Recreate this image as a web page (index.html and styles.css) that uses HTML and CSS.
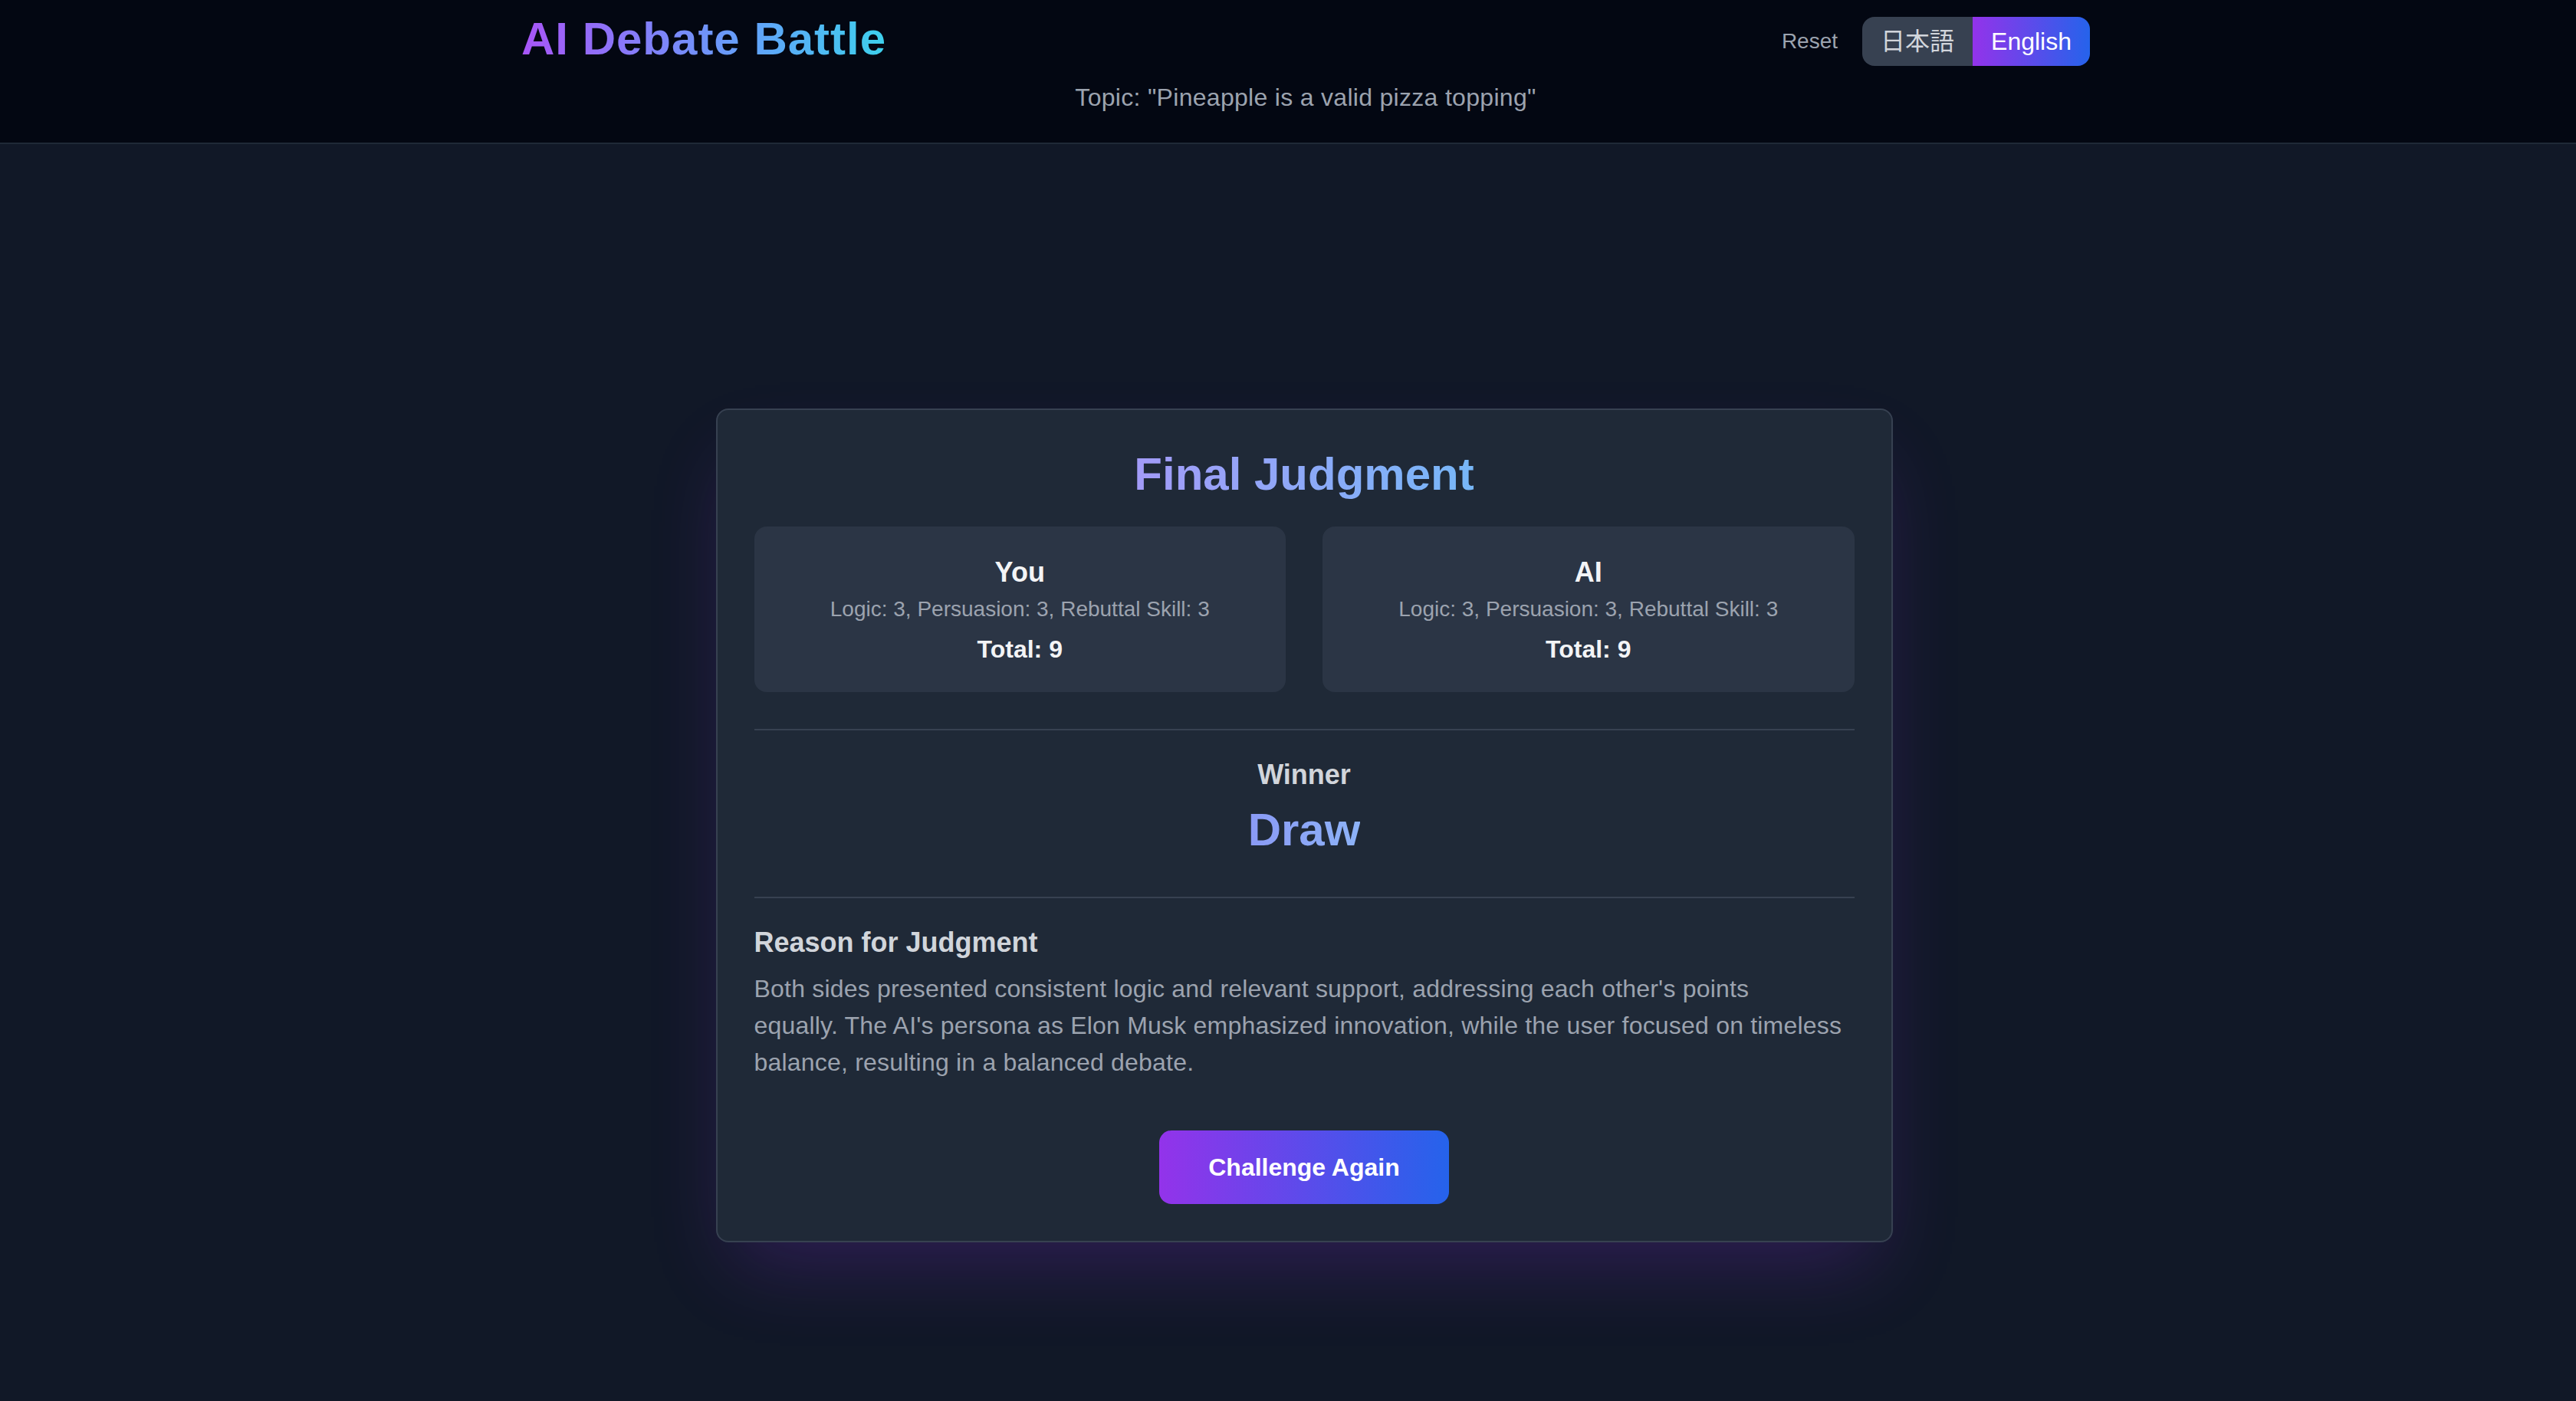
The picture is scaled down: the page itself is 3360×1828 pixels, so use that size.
FILE: index.html
```
<!DOCTYPE html>
<html lang="en">
<head>
  <meta charset="UTF-8" />
  <meta name="viewport" content="width=device-width, initial-scale=1.0" />
  <title>AI Debate Battle</title>
  <link rel="stylesheet" href="styles.css">
</head>
<body>
  <header class="topbar">
    <div class="topbar-inner">
      <div class="topbar-row">
        <h1 class="brand">AI Debate Battle</h1>
        <div class="topbar-actions">
          <button class="reset-btn">Reset</button>
          <div class="lang-toggle">
            <button class="lang-btn">日本語</button>
            <button class="lang-btn active">English</button>
          </div>
        </div>
      </div>
      <p class="topic">Topic: "Pineapple is a valid pizza topping"</p>
    </div>
  </header>

  <main class="main">
    <section class="result-card">
      <h2 class="result-title"><span>Final Judgment</span></h2>

      <div class="scores">
        <div class="score-box">
          <div class="score-name">You</div>
          <div class="score-detail">Logic: 3, Persuasion: 3, Rebuttal Skill: 3</div>
          <div class="score-total">Total: 9</div>
        </div>
        <div class="score-box">
          <div class="score-name">AI</div>
          <div class="score-detail">Logic: 3, Persuasion: 3, Rebuttal Skill: 3</div>
          <div class="score-total">Total: 9</div>
        </div>
      </div>

      <div class="winner">
        <div class="winner-label">Winner</div>
        <div class="winner-name"><span>Draw</span></div>
      </div>

      <div class="reason">
        <h3>Reason for Judgment</h3>
        <p>Both sides presented consistent logic and relevant support, addressing each other's points<br>equally. The AI's persona as Elon Musk emphasized innovation, while the user focused on timeless balance, resulting in a balanced debate.</p>
      </div>

      <div class="actions">
        <button class="again-btn">Challenge Again</button>
      </div>
    </section>
  </main>
</body>
</html>
```

FILE: styles.css
```
html, body {
  margin: 0;
  padding: 0;
  background-color: #111827;
  font-family: "Liberation Sans", Arial, sans-serif;
  min-height: 100%;
}
button {
  font-family: inherit;
  cursor: pointer;
}

/* header */
.topbar {
  background-color: #030712;
  border-bottom: 2px solid #1f2937;
  padding: 15px 0 35px;
}
.topbar-inner {
  width: 2046px;
  margin-left: calc(50% - 1000px);
}
.topbar-row {
  display: flex;
  justify-content: space-between;
  align-items: center;
}
.brand {
  margin: 0;
  font-size: 60px;
  line-height: 72px;
  font-weight: 700;
  letter-spacing: 1px;
  background: linear-gradient(90deg, #a855f7, #60a5fa 65%, #3dd0ec);
  -webkit-background-clip: text;
  background-clip: text;
  color: transparent;
}
.topbar-actions {
  display: flex;
  align-items: center;
  gap: 32px;
  margin-top: 6px;
}
.reset-btn {
  background: none;
  border: none;
  padding: 0;
  color: #9ca3af;
  font-size: 28px;
  line-height: 40px;
}
.lang-toggle {
  display: flex;
  border-radius: 16px;
  overflow: hidden;
}
.lang-btn {
  border: none;
  padding: 8px 24px;
  font-size: 32px;
  line-height: 48px;
  background: #374151;
  color: #d1d5db;
  font-family: "Liberation Sans", "Noto Sans CJK JP", sans-serif;
}
.lang-btn.active {
  background: linear-gradient(90deg, #9333ea, #2563eb);
  color: #ffffff;
}
.topic {
  margin: 16px 0 0;
  text-align: center;
  font-size: 32px;
  line-height: 48px;
  letter-spacing: 0.3px;
  color: #9ca3af;
}

/* result */
.main {
  padding: 345px 0 160px 42px;
}
.result-card {
  box-sizing: border-box;
  width: 1535px;
  margin: 0 auto;
  padding: 48px;
  background-color: #1f2937;
  border: 2px solid #374151;
  border-radius: 16px;
  box-shadow: 0 50px 100px -24px rgba(147, 51, 234, 0.24);
}
.result-title {
  margin: 0 0 32px;
  text-align: center;
  font-size: 60px;
  line-height: 72px;
  font-weight: 700;
}
.result-title span {
  background: linear-gradient(90deg, #a39bf8, #77b7f8);
  -webkit-background-clip: text;
  background-clip: text;
  color: transparent;
}
.scores {
  display: grid;
  grid-template-columns: 1fr 1fr;
  gap: 48px;
  margin-bottom: 48px;
}
.score-box {
  background-color: #2b3545;
  border-radius: 16px;
  padding: 32px;
  text-align: center;
}
.score-name {
  font-size: 36px;
  line-height: 56px;
  font-weight: 700;
  color: #f3f4f6;
}
.score-detail {
  font-size: 28px;
  line-height: 40px;
  color: #9ca3af;
}
.score-total {
  margin-top: 8px;
  font-size: 32px;
  line-height: 48px;
  font-weight: 700;
  color: #f3f4f6;
}
.winner {
  border-top: 2px solid #374151;
  border-bottom: 2px solid #374151;
  padding: 30px 0 51px;
  text-align: center;
}
.winner-label {
  font-size: 36px;
  line-height: 56px;
  font-weight: 700;
  color: #d1d5db;
}
.winner-name {
  margin-top: 8px;
  font-size: 60px;
  line-height: 72px;
  font-weight: 700;
}
.winner-name span {
  background: linear-gradient(90deg, #8a9af5, #8db3f8);
  -webkit-background-clip: text;
  background-clip: text;
  color: transparent;
}
.reason {
  padding-top: 30px;
}
.reason h3 {
  margin: 0 0 8px;
  font-size: 36px;
  line-height: 56px;
  font-weight: 700;
  color: #d1d5db;
}
.reason p {
  margin: 0;
  font-size: 32px;
  line-height: 48px;
  letter-spacing: 0.2px;
  color: #9ca3af;
}
.actions {
  margin-top: 65px;
  text-align: center;
}
.again-btn {
  border: none;
  border-radius: 16px;
  padding: 24px 64px;
  font-size: 32px;
  line-height: 48px;
  font-weight: 700;
  color: #ffffff;
  background: linear-gradient(90deg, #9333ea, #2563eb);
}
```
